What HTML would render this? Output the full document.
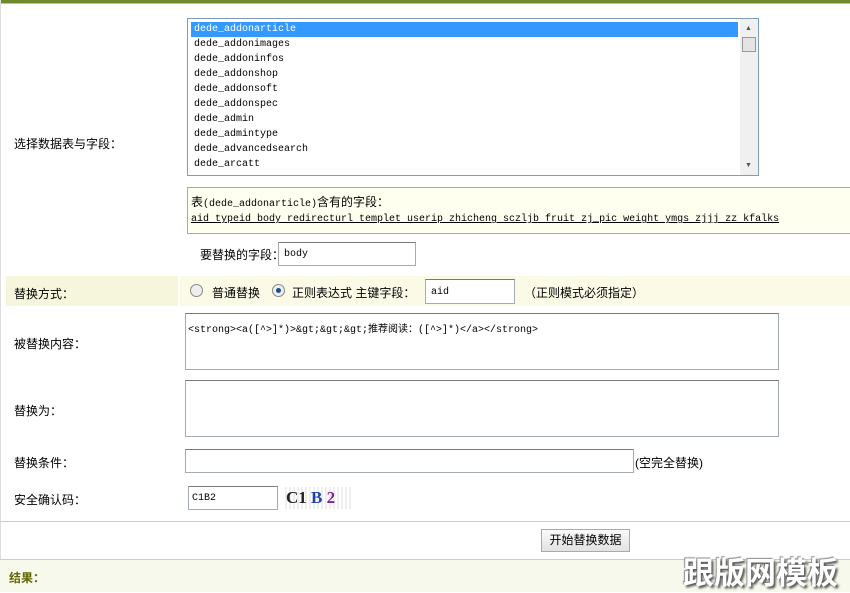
<!DOCTYPE html>
<html><head><meta charset="utf-8"><style>
*{margin:0;padding:0;box-sizing:border-box}
body{width:850px;height:592px;background:#fff;position:relative;overflow:hidden;font-family:"Liberation Sans","Noto Sans CJK SC",sans-serif;font-size:12px;color:#000}
.a{position:absolute}
.mono{font-family:"Liberation Mono","Noto Sans CJK SC",monospace;font-size:10px}
.lbl{position:absolute;left:14px;font-size:12px}
.inp{position:absolute;border:1px solid #a5acb2;border-top-color:#7a7a7a;background:#fff}
</style></head><body>
<div class="a" style="left:0;top:0;width:850px;height:3px;background:#6d8a2c"></div>
<div class="a" style="left:0;top:3px;width:850px;height:1px;background:#b9c98e"></div>
<div class="a" style="left:0;top:0;width:1px;height:592px;background:#ddd"></div>

<div class="a" style="left:187px;top:18px;width:572px;height:158px;border:1px solid #7f9db9;background:#fff"></div>
<div class="a" style="left:191px;top:22px;width:547px;height:15px;background:#3399ff"></div>
<div class="a mono" style="left:194px;top:22px;line-height:15px">
<div style="color:#fff">dede_addonarticle</div><div>dede_addonimages</div><div>dede_addoninfos</div><div>dede_addonshop</div><div>dede_addonsoft</div><div>dede_addonspec</div><div>dede_admin</div><div>dede_admintype</div><div>dede_advancedsearch</div><div>dede_arcatt</div></div>
<div class="a" style="left:740px;top:19px;width:18px;height:156px;background:#f0f0f0"></div>
<div class="a" style="left:742px;top:37px;width:14px;height:15px;background:#e4e4e4;border:1px solid #999"></div>
<div class="a" style="left:745px;top:25px;font-size:7px;color:#555">▲</div>
<div class="a" style="left:745px;top:162px;font-size:7px;color:#555">▼</div>
<div class="lbl" style="top:135px">选择数据表与字段：</div>

<div class="a" style="left:187px;top:187px;width:670px;height:47px;border:1px solid #aaa;background:#fffff0"></div>
<div class="a" style="left:191px;top:193px;font-size:12px">表<span class="mono">(dede_addonarticle)</span>含有的字段：</div>
<div class="a mono" style="left:191px;top:214px;text-decoration:underline">aid typeid body redirecturl templet userip zhicheng sczljb fruit zj_pic weight ymgs zjjj zz kfalks</div>
<div class="a" style="left:200px;top:246px">要替换的字段：</div>
<div class="inp mono" style="left:278px;top:242px;width:138px;height:24px;padding:6px 5px">body</div>

<div class="a" style="left:6px;top:276px;width:172px;height:30px;background:#f6f6dc"></div>
<div class="a" style="left:180px;top:276px;width:670px;height:30px;background:#fafae6"></div>
<div class="lbl" style="top:285px">替换方式：</div>
<div class="a" style="left:190px;top:284px;width:13px;height:13px;border-radius:50%;border:1px solid #888;background:#eee"></div>
<div class="a" style="left:212px;top:284px">普通替换</div>
<div class="a" style="left:272px;top:284px;width:13px;height:13px;border-radius:50%;border:1px solid #888;background:#eee"></div>
<div class="a" style="left:276px;top:288px;width:5px;height:5px;border-radius:50%;background:#1a4f8f"></div>
<div class="a" style="left:292px;top:284px">正则表达式 主键字段：</div>
<div class="inp mono" style="left:425px;top:279px;width:90px;height:25px;padding:7px 5px">aid</div>
<div class="a" style="left:524px;top:284px">（正则模式必须指定）</div>

<div class="lbl" style="top:335px">被替换内容：</div>
<div class="inp" style="left:185px;top:313px;width:594px;height:57px"></div>
<div class="a mono" style="left:188px;top:320px">&lt;strong&gt;&lt;a([^&gt;]*)&gt;&amp;gt;&amp;gt;&amp;gt;推荐阅读：([^&gt;]*)&lt;/a&gt;&lt;/strong&gt;</div>

<div class="lbl" style="top:402px">替换为：</div>
<div class="inp" style="left:185px;top:380px;width:594px;height:57px"></div>

<div class="lbl" style="top:454px">替换条件：</div>
<div class="inp" style="left:185px;top:449px;width:449px;height:24px"></div>
<div class="a" style="left:635px;top:454px">(空完全替换)</div>

<div class="lbl" style="top:491px">安全确认码：</div>
<div class="inp mono" style="left:188px;top:486px;width:90px;height:24px;padding:6px 3px">C1B2</div>
<div class="a" style="left:285px;top:487px;width:66px;height:22px;background:repeating-linear-gradient(90deg,#eee 0 2px,#fff 2px 4px);font:bold 17px 'Liberation Serif',serif;line-height:22px;padding-left:1px"><span style="color:#222">C1</span> <span style="color:#2244aa">B</span> <span style="color:#882299">2</span></div>

<div class="a" style="left:0;top:521px;width:850px;height:1px;background:#ccc"></div>
<div class="a" style="left:541px;top:529px;width:89px;height:23px;border:1px solid #aaa;background:linear-gradient(#fafafa,#e2e2e2);text-align:center;line-height:21px">开始替换数据</div>
<div class="a" style="left:0;top:559px;width:850px;height:1px;background:#ccc"></div>
<div class="a" style="left:0;top:560px;width:850px;height:32px;background:#f7f9ec"></div>
<div class="a" style="left:9px;top:569px;font-weight:bold;color:#666600">结果：</div>
<div class="a" style="left:683px;top:548px;font:bold 31px 'Noto Sans CJK SC',sans-serif;color:#fff;letter-spacing:0px;text-shadow:2px 2px 2px #555,-1px -1px 1px #888">跟版网模板</div>
</body></html>
